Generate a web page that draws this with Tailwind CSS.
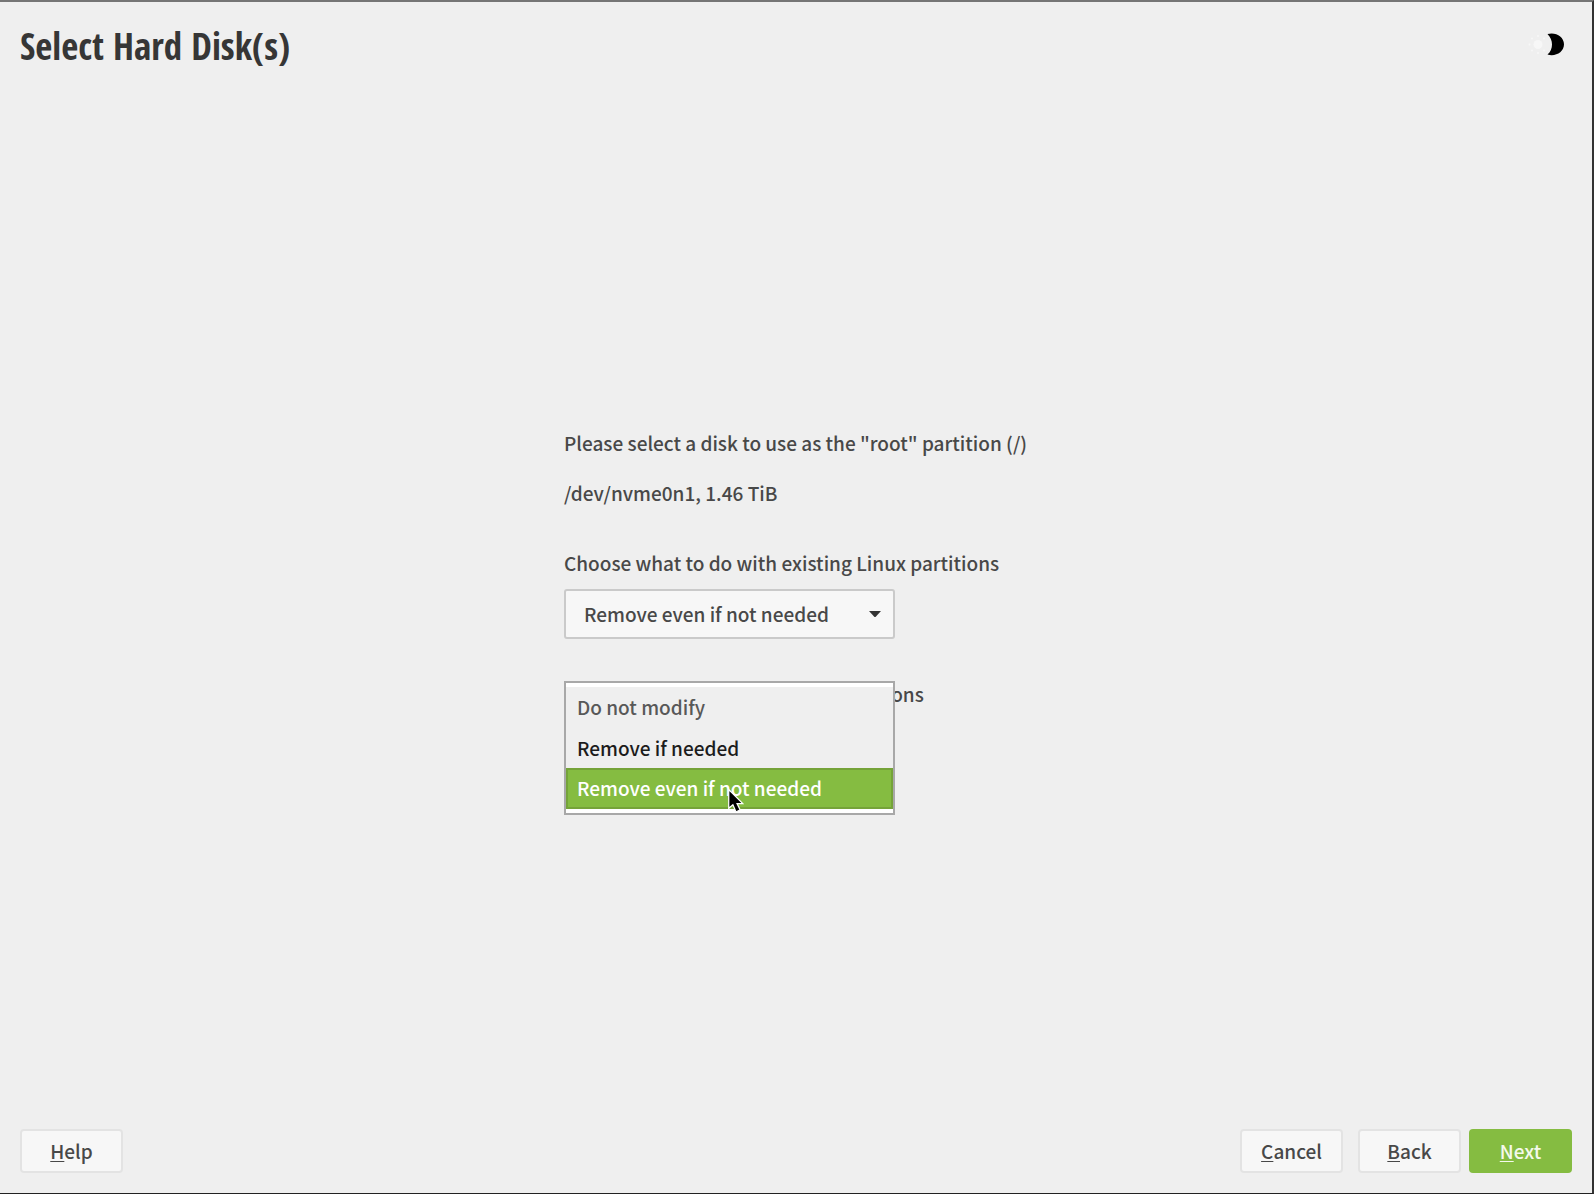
<!DOCTYPE html>
<html lang="en">
<head>
<meta charset="utf-8">
<meta name="viewport" content="width=device-width, initial-scale=1">
<title>Select Hard Disk(s)</title>
<script src="https://cdn.jsdelivr.net/npm/@tailwindcss/browser@4"></script>
</head>
<body class="flex min-h-screen flex-col border-t-2 border-r-2 border-b border-t-[#757575] border-r-[#333] border-b-[#222] bg-[#efefef] font-['Source_Sans_Pro','Noto_Sans_CJK_SC',sans-serif] text-[19px] leading-[30px] font-medium text-[#484848]">
<header class="flex items-center justify-between px-5 pt-4">
  <h1 class="font-['Open_Sans_Condensed','Noto_Sans_CJK_SC',sans-serif] text-[37px] leading-[56px] font-bold text-[#363636]">Select Hard Disk(s)</h1>
  <button type="button" aria-label="Toggle dark theme" class="mr-2 mb-1">
    <svg class="block h-6 w-9" viewBox="0 0 36 24">
      <g fill="#f7f7f7"><circle cx="10" cy="12.500" r="4.500"/><circle cx="1.500" cy="12.500" r="1"/><circle cx="10" cy="4" r="1"/><circle cx="10" cy="21" r="1"/><circle cx="4" cy="6.500" r="1"/><circle cx="16" cy="6.500" r="1"/><circle cx="4" cy="18.500" r="1"/><circle cx="16" cy="18.500" r="1"/></g>
      <path d="M19.500 2C27.500-.3 36 4.500 36 12.300S27.500 25 19.500 22.600C25.500 17 25.500 8 19.500 2Z" fill="#000"/>
    </svg>
  </button>
</header>

<main class="flex flex-1 items-center justify-center pb-1.5">
  <form class="flex w-[464px] flex-col items-start">
    <p>Please select a disk to use as the "root" partition (/)</p>
    <p class="mt-5">/dev/nvme0n1, 1.46 TiB</p>
    <label for="linux" class="mt-10">Choose what to do with existing Linux partitions</label>
    <div class="relative mt-[11px]">
      <select id="linux" class="h-[50px] w-[331px] appearance-none rounded-[3px] border-2 border-[#cacaca] bg-[#f7f7f7] pl-[18px]">
        <option>Do not modify</option>
        <option>Remove if needed</option>
        <option selected>Remove even if not needed</option>
      </select>
      <svg class="pointer-events-none absolute top-5 right-3 h-3 w-4" viewBox="0 0 16 12"><path d="M2 2h12L8.500 8h-1Z" fill="#333"/></svg>
      <ul role="listbox" aria-label="Existing Linux partitions" class="absolute top-[92px] left-0 z-10 w-full border-2 border-[#a8a8a8] bg-white py-1">
        <li role="option" class="h-[41px] bg-[#efefef] pl-[11px] leading-10 text-[#585858]">Do not modify</li>
        <li role="option" class="h-10 bg-[#efefef] pl-[11px] leading-10 text-[#1c1c1c]">Remove if needed</li>
        <li role="option" aria-selected="true" class="relative h-[41px] border-2 border-[#75a339] bg-[#85bc41] pl-[9px] leading-9 text-white">Remove even if not needed
          <svg class="absolute top-[18px] left-[159px] h-[25px] w-[17px]" viewBox="0 0 16 24"><path d="M1.500 1.500v18l4-3.500 3 7 4-2-3-6h5.500Z" fill="#000" stroke="#fff" stroke-width="1.200"/></svg>
        </li>
      </ul>
    </div>
    <label for="other" class="mt-10">Choose what to do with other partitions</label>
    <select id="other" class="mt-[11px] h-[50px] w-[331px] appearance-none rounded-[3px] border-2 border-[#cacaca] bg-[#f7f7f7] pl-[18px]">
      <option>Do not modify</option>
      <option selected>Remove if needed</option>
      <option>Remove even if not needed</option>
    </select>
  </form>
</main>

<footer class="flex items-center px-5 pb-5">
  <button type="button" class="h-11 w-[103px] rounded border-2 border-[#e3e3e3] bg-[#f7f7f7]"><span class="underline underline-offset-2">H</span>elp</button>
  <button type="button" class="ml-auto h-11 w-[103px] rounded border-2 border-[#e3e3e3] bg-[#f7f7f7]"><span class="underline underline-offset-2">C</span>ancel</button>
  <button type="button" class="ml-[15px] h-11 w-[103px] rounded border-2 border-[#e3e3e3] bg-[#f7f7f7]"><span class="underline underline-offset-2">B</span>ack</button>
  <button type="submit" class="ml-2 h-11 w-[103px] rounded bg-[#85bc41] text-[#f4f9ec]"><span class="underline underline-offset-2">N</span>ext</button>
</footer>
</body>
</html>
